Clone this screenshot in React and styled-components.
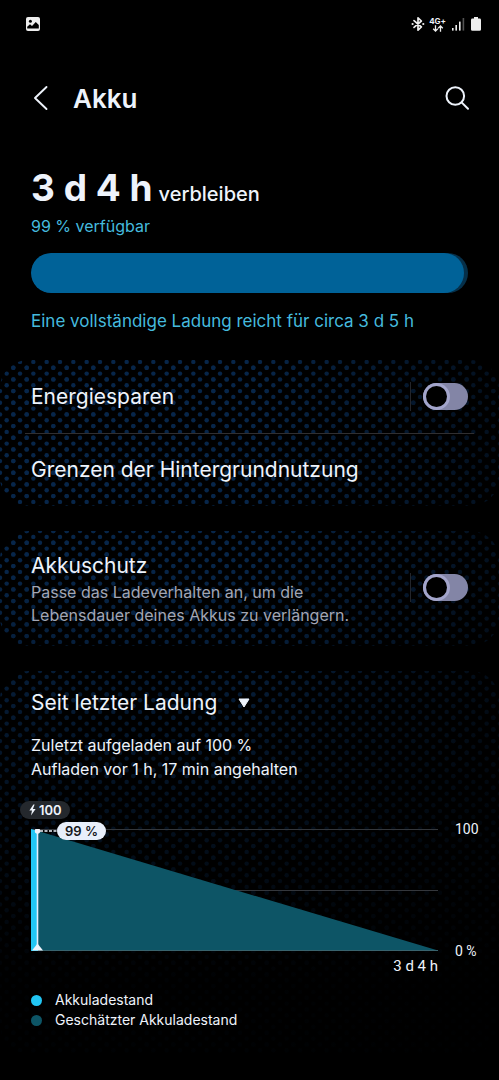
import React, { useState } from 'react';
import styled, { createGlobalStyle } from 'styled-components';

const GlobalStyle = createGlobalStyle`
  * {
    box-sizing: border-box;
  }

  body {
    margin: 0;
    background: #000;
    color: #eef3fb;
    font-family: Inter, Roboto, sans-serif;
  }

  button, select {
    font: inherit;
    color: inherit;
    background: none;
    border: 0;
    padding: 0;
    cursor: pointer;
  }

  h1, h2, p, ul {
    margin: 0;
    padding: 0;
  }
`

// one 40x35 tile holds a 3x3 block of staggered dot pairs
const dots = [0, 1, 2].flatMap((row) => [0, 1, 2].map((col) => {
  const x = col * 13.333;
  const y = row * 11.667;
  return `<circle cx='${x + 6.667}' cy='${y + 2.917}' r='2.2'/><circle cx='${x + 13.333}' cy='${y + 8.75}' r='2.2'/><circle cx='${x}' cy='${y + 8.75}' r='2.2'/>`;
})).join('');
const dotTile = `url("data:image/svg+xml,${encodeURIComponent(`<svg xmlns='http://www.w3.org/2000/svg' width='40' height='35' fill='#07264a'>${dots}</svg>`)}")`;

const Page = styled.div`
  min-height: 100vh;
  padding-bottom: 24px;
`

const StatusBar = styled.div`
  height: 48px;
  padding: 0 17px 0 25px;
  display: flex;
  align-items: center;
  justify-content: space-between;

  svg {
    display: block;
  }
`

const StatusIcons = styled.div`
  display: flex;
  align-items: center;
  gap: 4px;
`

const Network = styled.div`
  display: flex;
  flex-direction: column;
  align-items: center;
  font-size: 8px;
  line-height: 8px;
  font-weight: 700;
`

const Header = styled.header`
  height: 100px;
  padding: 0 29px 0 31px;
  display: flex;
  align-items: center;
`

const Title = styled.h1`
  flex: 1;
  padding: 2px 0 0 22px;
  font-size: 26px;
  line-height: 32px;
  font-weight: 600;
`

const IconButton = styled.button`
  display: flex;

  svg {
    display: block;
  }
`

const Summary = styled.section`
  padding: 22px 31px 0;
`

const Remaining = styled.p`
  font-size: 20px;
  line-height: 36px;
  font-weight: 500;

  strong {
    font-size: 37px;
    font-weight: 700;
    margin-right: 6px;
  }
`

const Hint = styled.p`
  color: #45bade;
  font-size: ${({ $large }) => ($large ? '17px' : '16px')};
  line-height: 28px;
`

const Track = styled.div`
  height: 40px;
  margin: 13px 0 14px;
  border-radius: 20px;
  background: #06304a;
  overflow: hidden;
`

const Fill = styled.div`
  height: 100%;
  border-radius: 20px;
  background: #006298;
`

const Card = styled.section`
  margin-top: 25px;
  padding: ${({ $pad }) => $pad || '0'};
  border-radius: 28px;
  background-color: #000;
  background-image:
    linear-gradient(to bottom, transparent 560px, rgba(0, 0, 0, .95) 980px),
    linear-gradient(to right, transparent 50%, rgba(0, 0, 0, .6) 100%),
    ${dotTile};
  background-size: auto, auto, 40px 35px;
  background-position: 0 0, 0 0, 0 9px;
  background-attachment: fixed;
`

const Row = styled.div`
  min-height: 73px;
  padding: 0 31px;
  display: flex;
  align-items: center;
  justify-content: space-between;
`

const RowButton = styled(Row).attrs({ as: 'button', type: 'button' })`
  width: 100%;
  text-align: left;
`

const Divider = styled.hr`
  height: 1px;
  margin: 0 25px -1px;
  border: 0;
  background: #302f31;
`

const Label = styled.label`
  font-size: 21px;
  line-height: 28px;
`

const Name = styled.span`
  font-size: 21px;
  line-height: 28px;
`

const TextBlock = styled.div`
  padding-top: 5px;
`

const Description = styled.p`
  margin-top: 1px;
  color: #a2a6b4;
  font-size: 16px;
  line-height: 23px;
`

const SwitchWrap = styled.div`
  height: 29px;
  padding-left: 12px;
  border-left: 1px solid #23252b;
  display: flex;
  align-items: center;
`

const Toggle = styled.input.attrs({ type: 'checkbox', role: 'switch' })`
  appearance: none;
  width: 45px;
  height: 27px;
  margin: 0;
  padding: 3px;
  border-radius: 14px;
  background: ${({ checked }) => (checked ? '#006298' : '#8385a6')};
  display: flex;
  justify-content: ${({ checked }) => (checked ? 'flex-end' : 'flex-start')};
  cursor: pointer;

  &::before {
    content: '';
    width: 21px;
    height: 21px;
    border-radius: 50%;
    background: #000;
    box-shadow: 0 0 0 3px #a3a5cb;
  }
`

const Picker = styled.label`
  display: inline-flex;
  align-items: center;
  gap: 20px;

  svg {
    display: block;
    pointer-events: none;
  }
`

const Select = styled.select`
  appearance: none;
  font-size: 21px;
  line-height: 28px;

  option {
    background: #000;
  }
`

const Details = styled.p`
  margin-top: 16px;
  font-size: 16px;
  line-height: 24px;
`

const Chart = styled.div`
  margin-top: 48px;
  display: grid;
  grid-template-columns: 1fr 30px;
  column-gap: 17px;
`

const Plot = styled.div`
  position: relative;
  height: 122px;

  > svg {
    display: block;
    width: 100%;
    height: 100%;
  }
`

const Marker = styled.svg`
  position: absolute;
  left: 0;
  top: 0;
  max-width: 32px;
`

const ChargeTag = styled.span`
  position: absolute;
  left: -11px;
  top: -28px;
  height: 18px;
  padding: 0 8px;
  border-radius: 9px;
  background: #24282d;
  display: flex;
  align-items: center;
  gap: 2px;
  font-size: 13px;
  font-weight: 600;
`

const LevelTag = styled.span`
  position: absolute;
  left: 26px;
  top: -7px;
  height: 18px;
  padding: 0 8px;
  border-radius: 9px;
  background: #e8effb;
  color: #14171c;
  font-size: 13px;
  line-height: 18px;
  font-weight: 600;
`

const Scale = styled.div`
  margin: -8px 0;
  display: flex;
  flex-direction: column;
  justify-content: space-between;
  font: 14px/16px Roboto, sans-serif;
  white-space: nowrap;
`

const EndTime = styled.div`
  padding-top: 5px;
  text-align: right;
  font: 15px/20px Roboto, sans-serif;
`

const Legend = styled.ul`
  margin-top: 14px;
  list-style: none;
  font-size: 14px;
  line-height: 20px;
`

const LegendItem = styled.li`
  display: flex;
  align-items: center;
  gap: 13px;

  &::before {
    content: '';
    width: 11px;
    height: 11px;
    border-radius: 50%;
    background: ${({ $color }) => $color};
  }
`

function PictureIcon() {
  return (
    <svg width="16" height="16" viewBox="0 0 16 16">
      <rect x="1" y="1" width="14" height="14" rx="2" fill="#eee" />
      <circle cx="5.4" cy="5.2" r="1.5" fill="#000" />
      <path d="M2.2 12.6V10.8L5 8.2l2 1.8 3.8-4 3 3v3.6z" fill="#000" />
    </svg>
  )
}

function BluetoothIcon() {
  return (
    <svg width="14" height="16" viewBox="0 0 14 16">
      <path d="M3 4.6L10.4 11 7 14.2V1.8L10.4 5 3 11.4" fill="none" stroke="#eee" strokeWidth="1.7" strokeLinejoin="round" strokeLinecap="round" />
      <circle cx="1.6" cy="8" r="1.1" fill="#eee" />
      <circle cx="12.3" cy="8" r="1.1" fill="#eee" />
    </svg>
  )
}

function SignalIcon() {
  return (
    <svg width="16" height="16" viewBox="-1 0 16 16">
      <g fill="#eee">
        <rect x="1" y="12" width="1.6" height="2.6" />
        <rect x="4.4" y="9" width="1.6" height="5.6" />
        <rect x="8" y="5.6" width="1.6" height="9" />
        <rect x="11.6" y="2" width="1.6" height="12.6" opacity=".35" />
      </g>
    </svg>
  )
}

function BatteryIcon() {
  return (
    <svg width="12" height="16" viewBox="0 0 12 16">
      <path d="M4 1h4v1.6h1.6q1.4 0 1.4 1.4v9.4q0 1.4-1.4 1.4H2.4Q1 14.8 1 13.4V4q0-1.4 1.4-1.4H4z" fill="#eee" />
    </svg>
  )
}

function Switch({ id }) {
  const [on, setOn] = useState(false);

  return (
    <SwitchWrap>
      <Toggle id={id} checked={on} onChange={(e) => setOn(e.target.checked)} />
    </SwitchWrap>
  )
}

function BatteryChart() {
  return (
    <Chart>
      <Plot>
        <svg viewBox="0 0 407 122" preserveAspectRatio="none">
          <path d="M0 .5H407M0 61.5H407" stroke="#34373c" />
          <path d="M7 2L407 121.5H7z" fill="#0d5566" />
          <path d="M0 121.5H407" stroke="#39636d" />
        </svg>
        <Marker width="32" height="122" viewBox="0 0 32 122">
          <path d="M0 0L7 2V122H0z" fill="#22c6f4" />
          <path d="M9 2H26" stroke="#eef3fb" strokeWidth="1.6" strokeDasharray="3 1.5" />
          <path d="M6.5 2V121" stroke="#e8effb" strokeWidth="1.6" />
          <circle cx="6.5" cy="2" r="2.7" fill="#eef3fb" />
          <path d="M6.5 114.5L12 121.5H1z" fill="#eef3fb" />
        </Marker>
        <ChargeTag>
          <svg width="9" height="12" viewBox="0 0 9 12">
            <path d="M5.4 .5L1.4 6.6H4L3 11.5 7.6 5H4.9L6.6 .5z" fill="#eef3fb" />
          </svg>
          100
        </ChargeTag>
        <LevelTag>99 %</LevelTag>
      </Plot>
      <Scale>
        <span>100</span>
        <span>0 %</span>
      </Scale>
      <EndTime>3 d 4 h</EndTime>
    </Chart>
  )
}

function App() {
  const level = 99;

  return (
    <Page>
      <GlobalStyle />
      <StatusBar>
        <PictureIcon />
        <StatusIcons>
          <BluetoothIcon />
          <Network>
            4G+
            <svg width="12" height="7" viewBox="0 0 12 7">
              <path d="M3.5 .3V6M1.2 3.8L3.5 6 5.8 3.8M8.5 6.7V1M6.2 3.2L8.5 1l2.3 2.2" fill="none" stroke="#eee" strokeWidth="1.3" />
            </svg>
          </Network>
          <SignalIcon />
          <BatteryIcon />
        </StatusIcons>
      </StatusBar>

      <Header>
        <IconButton type="button" aria-label="Zurück">
          <svg width="20" height="26" viewBox="0 0 20 26">
            <path d="M15.5 2L4 13l11.5 11" fill="none" stroke="#eef3fb" strokeWidth="1.9" strokeLinecap="round" strokeLinejoin="round" />
          </svg>
        </IconButton>
        <Title>Akku</Title>
        <IconButton type="button" aria-label="Suchen">
          <svg width="26" height="26" viewBox="0 0 26 26">
            <g fill="none" stroke="#eef3fb" strokeWidth="2" strokeLinecap="round">
              <circle cx="11.3" cy="11" r="8.8" />
              <path d="M17.6 17.4L24 23.8" />
            </g>
          </svg>
        </IconButton>
      </Header>

      <Summary>
        <Remaining><strong>3 d 4 h</strong>verbleiben</Remaining>
        <Hint>{level} % verfügbar</Hint>
        <Track><Fill style={{ width: `${level}%` }} /></Track>
        <Hint $large>Eine vollständige Ladung reicht für circa 3 d 5 h</Hint>
      </Summary>

      <Card>
        <Row>
          <Label htmlFor="saver">Energiesparen</Label>
          <Switch id="saver" />
        </Row>
        <Divider />
        <RowButton><Name>Grenzen der Hintergrundnutzung</Name></RowButton>
      </Card>

      <Card $pad="16px 0 19px">
        <Row>
          <TextBlock>
            <Label htmlFor="protect">Akkuschutz</Label>
            <Description>
              Passe das Ladeverhalten an, um die<br />
              Lebensdauer deines Akkus zu verlängern.
            </Description>
          </TextBlock>
          <Switch id="protect" />
        </Row>
      </Card>

      <Card $pad="18px 14px 24px 31px">
        <Picker>
          <Select aria-label="Zeitraum">
            <option>Seit letzter Ladung</option>
          </Select>
          <svg width="12" height="10" viewBox="0 0 12 10">
            <path d="M1 1H11L6 9z" fill="#eef3fb" stroke="#eef3fb" strokeLinejoin="round" />
          </svg>
        </Picker>
        <Details>
          Zuletzt aufgeladen auf 100 %<br />
          Aufladen vor 1 h, 17 min angehalten
        </Details>
        <BatteryChart />
        <Legend>
          <LegendItem $color="#22c6f4">Akkuladestand</LegendItem>
          <LegendItem $color="#0d5566">Geschätzter Akkuladestand</LegendItem>
        </Legend>
      </Card>
    </Page>
  )
}

export default App;
